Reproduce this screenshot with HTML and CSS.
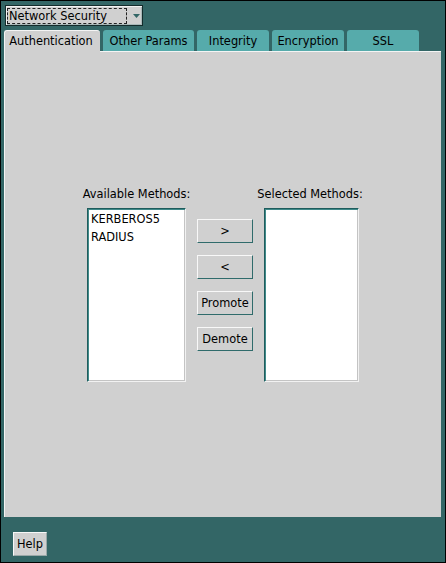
FILE: index.html
```html
<!DOCTYPE html>
<html>
<head>
<meta charset="utf-8">
<title>Network Security</title>
<link rel="stylesheet" href="styles.css">
</head>
<body>
  <div class="combo">
    <span class="combo-text">Network Security</span>
    <svg class="combo-arrow" width="7" height="4" viewBox="0 0 7 4"><path d="M0 0H7L3.5 4Z" fill="#336666"/></svg>
  </div>
  <div class="tabs">
    <div class="tab tab-active">Authentication</div>
    <div class="tab tab-w91">Other Params</div>
    <div class="tab">Integrity</div>
    <div class="tab">Encryption</div>
    <div class="tab">SSL</div>
  </div>
  <div class="panel">
    <div class="group">
      <div class="col col-left">
        <div class="label">Available Methods:</div>
        <div class="list list-left">
          <div class="item">KERBEROS5</div>
          <div class="item">RADIUS</div>
        </div>
      </div>
      <div class="buttons">
        <button class="btn">&gt;</button>
        <button class="btn">&lt;</button>
        <button class="btn">Promote</button>
        <button class="btn">Demote</button>
      </div>
      <div class="col col-right">
        <div class="label">Selected Methods:</div>
        <div class="list list-right"></div>
      </div>
    </div>
  </div>
  <div class="footer">
    <button class="btn btn-help">Help</button>
  </div>
</body>
</html>
```
FILE: styles.css
```css
html, body {
  margin: 0;
}
body {
  width: 446px;
  height: 563px;
  box-sizing: border-box;
  border: 1px solid #000;
  background: #336666;
  font-family: "DejaVu Sans", sans-serif;
  font-size: 11.4px;
  color: #000;
  padding: 4px 3px 0 3px;
  display: flex;
  flex-direction: column;
  align-items: flex-start;
}
.combo {
  margin-left: 1px;
  width: 138px;
  height: 21px;
  box-sizing: border-box;
  border: 1px solid #142c2c;
  box-shadow: inset 1px 1px 0 #f2f2f2, inset -1px -1px 0 #a8b8b8;
  background: #d0d0d0;
  display: flex;
  align-items: center;
  padding-left: 1px;
}
.combo-text {
  width: 120px;
  height: 16px;
  box-sizing: border-box;
  border: 1px dashed #222;
  line-height: 14px;
  padding-left: 1px;
  white-space: nowrap;
}
.combo-arrow {
  margin-left: 6px;
  margin-top: 1px;
}
.tabs {
  margin-top: 4px;
  width: 437px;
  height: 22px;
  display: flex;
  gap: 3px;
  align-items: flex-start;
  background: linear-gradient(#f4f4f4, #f4f4f4) no-repeat right bottom / calc(100% - 96px) 1px;
}
.tab {
  width: 72px;
  height: 21px;
  box-sizing: border-box;
  background: #56abab;
  border-radius: 3px 3px 0 0;
  text-align: center;
  padding-top: 2px;
  line-height: 19px;
  white-space: nowrap;
}
.tab-w91 {
  width: 91px;
}
.tab-active {
  width: 96px;
  height: 22px;
  background: #d0d0d0;
  border-left: 1px solid #f4f4f4;
  border-top: 1px solid #f4f4f4;
  padding-top: 1px;
  padding-right: 3px;
}
.panel {
  width: 437px;
  height: 465px;
  box-sizing: border-box;
  background: #d0d0d0;
  border-left: 1px solid #f4f4f4;
  display: flex;
  align-items: center;
  justify-content: center;
}
.group {
  display: flex;
  align-items: flex-start;
  margin-top: -1px;
  margin-left: -2px;
}
.col {
  display: flex;
  flex-direction: column;
  align-items: center;
}
.col-left {
  width: 109px;
}
.col-right {
  width: 104px;
  margin-left: 5px;
}
.label {
  height: 14px;
  line-height: 14px;
  white-space: nowrap;
  margin-bottom: 7px;
}
.list {
  height: 174px;
  box-sizing: border-box;
  background: #fff;
  border: 1px solid;
  border-color: #1f5c5c #f2f2f2 #f2f2f2 #1f5c5c;
  box-shadow: inset 1px 1px 0 #3f8a8a, inset -1px -1px 0 #c4c4c4;
  padding: 1px 2px;
}
.list-left {
  width: 99px;
}
.list-right {
  width: 95px;
  margin-left: 3px;
}
.item {
  height: 18px;
  line-height: 18px;
  padding-left: 1px;
}
.buttons {
  width: 56px;
  margin-left: 6px;
  padding-top: 32px;
  display: flex;
  flex-direction: column;
  gap: 12px;
}
.btn {
  width: 56px;
  height: 24px;
  box-sizing: border-box;
  margin: 0;
  padding: 0;
  background: #d0d0d0;
  border: 1px solid;
  border-color: #f8f8f8 #2f6b6b #2f6b6b #f8f8f8;
  border-radius: 0;
  font-family: "DejaVu Sans", sans-serif;
  font-size: 11.4px;
  color: #000;
  line-height: 20px;
  text-align: center;
}
.footer {
  margin-top: 15px;
  margin-left: 9px;
}
.btn-help {
  width: 34px;
  border-color: #f8f8f8 #9aa8a8 #9aa8a8 #f8f8f8;
}
```
